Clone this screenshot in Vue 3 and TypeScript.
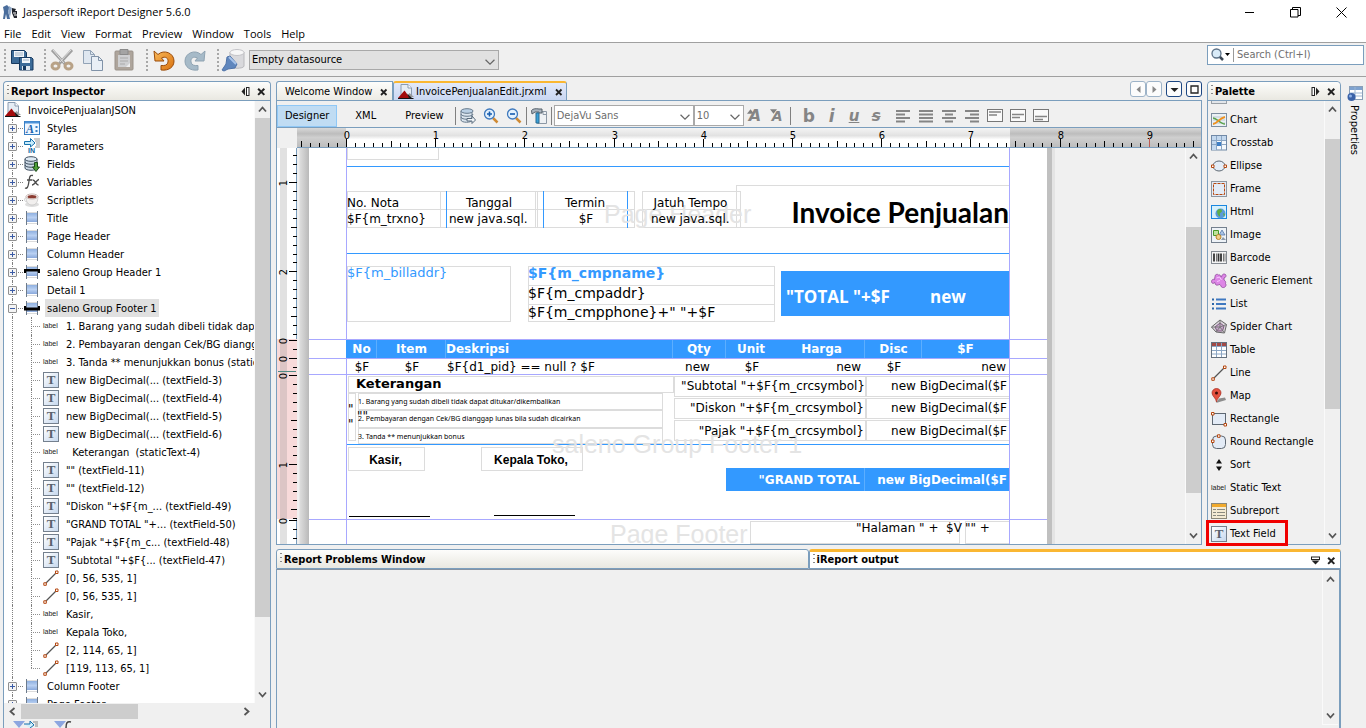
<script setup lang="ts">
interface TreeNode {
  label: string
  icon: string
  child?: boolean
  open?: boolean
  selected?: boolean
  last?: boolean
}
interface Shape {
  x: number
  y: number
  w: number
  h: number
  kind: string
}
interface CanvasText {
  t: string
  x: number
  y: number
  w?: number
  cls?: string
}

const menus = ['File', 'Edit', 'View', 'Format', 'Preview', 'Window', 'Tools', 'Help']

const tree: TreeNode[] = [
  { label: 'Styles', icon: 'styles' },
  { label: 'Parameters', icon: 'params' },
  { label: 'Fields', icon: 'fields' },
  { label: 'Variables', icon: 'fx' },
  { label: 'Scriptlets', icon: 'cup' },
  { label: 'Title', icon: 'band' },
  { label: 'Page Header', icon: 'band' },
  { label: 'Column Header', icon: 'band' },
  { label: 'saleno Group Header 1', icon: 'groupheader' },
  { label: 'Detail 1', icon: 'band' },
  { label: 'saleno Group Footer 1', icon: 'groupfooter', open: true, selected: true },
  { label: '1. Barang yang sudah dibeli tidak dapat ditukar', icon: 'label', child: true },
  { label: '2. Pembayaran dengan Cek/BG dianggap lunas', icon: 'label', child: true },
  { label: '3. Tanda ** menunjukkan bonus (staticText-3)', icon: 'label', child: true },
  { label: 'new BigDecimal(... (textField-3)', icon: 'text', child: true },
  { label: 'new BigDecimal(... (textField-4)', icon: 'text', child: true },
  { label: 'new BigDecimal(... (textField-5)', icon: 'text', child: true },
  { label: 'new BigDecimal(... (textField-6)', icon: 'text', child: true },
  { label: '  Keterangan  (staticText-4)', icon: 'label', child: true },
  { label: '"" (textField-11)', icon: 'text', child: true },
  { label: '"" (textField-12)', icon: 'text', child: true },
  { label: '"Diskon "+$F{m_... (textField-49)', icon: 'text', child: true },
  { label: '"GRAND TOTAL "+... (textField-50)', icon: 'text', child: true },
  { label: '"Pajak "+$F{m_c... (textField-48)', icon: 'text', child: true },
  { label: '"Subtotal "+$F{... (textField-47)', icon: 'text', child: true },
  { label: '[0, 56, 535, 1]', icon: 'line', child: true },
  { label: '[0, 56, 535, 1]', icon: 'line', child: true },
  { label: 'Kasir,', icon: 'label', child: true },
  { label: 'Kepala Toko,', icon: 'label', child: true },
  { label: '[2, 114, 65, 1]', icon: 'line', child: true },
  { label: '[119, 113, 65, 1]', icon: 'line', child: true, last: true },
  { label: 'Column Footer', icon: 'band' },
  { label: 'Page Footer', icon: 'band' },
]

const palette = [
  ['Chart', 'chart'], ['Crosstab', 'crosstab'], ['Ellipse', 'ellipse'], ['Frame', 'frame'],
  ['Html', 'html'], ['Image', 'image'], ['Barcode', 'barcode'], ['Generic Element', 'generic'],
  ['List', 'list'], ['Spider Chart', 'spider'], ['Table', 'table'], ['Line', 'line'],
  ['Map', 'map'], ['Rectangle', 'rect'], ['Round Rectangle', 'roundrect'], ['Sort', 'sort'],
  ['Static Text', 'label'], ['Subreport', 'subreport'], ['Text Field', 'text'],
]

const glyphs: Record<string, string> = { label: 'label', text: 'T', styles: 'A', params: 'IN' }

const letterFormats = [['b', 'Bold'], ['i', 'Italic'], ['u', 'Underline'], ['s', 'Strikethrough']]
const formats = [
  ['aleft', 'Align left'], ['ajust', 'Justify'], ['acenter', 'Align center'], ['aright', 'Align right'],
  ['vtop', 'Align top'], ['vmid', 'Align middle'], ['vbot', 'Align bottom'],
]

const INCH = 89.2
function ticks(start: number, from: number, to: number) {
  const out: { p: number; len: number; label: string }[] = []
  for (let n = -10; n < 110; n++) {
    const p = Math.round(start + (n * INCH) / 10)
    if (p < from || p > to) continue
    const major = n % 10 === 0
    out.push({ p, len: major ? 8 : n % 5 === 0 ? 6 : 4, label: major && n >= 0 ? String(n / 10) : '' })
  }
  return out
}
const hTicks = ticks(49, 2, 900)
const vTicks = [
  ...ticks(-55, 6, 188),
  ...ticks(192, 191, 206),
  ...ticks(210, 209, 222),
  ...ticks(227, 226, 370),
  ...ticks(372, 371, 395),
]

const shapes: Shape[] = [
  { x: 38, y: -10, w: 92, h: 22, kind: 'frame' },
  ...[[38, 100], [131, 98], [226, 100], [333, 99]].flatMap(([x, w]) => [
    { x, y: 43, w, h: 19, kind: 'frame' },
    { x, y: 61, w, h: 19, kind: 'frame' },
  ]),
  { x: 427, y: 37, w: 274, h: 43, kind: 'frame' },
  { x: 137, y: 43, w: 1, h: 37, kind: 'blue' },
  { x: 234, y: 43, w: 1, h: 37, kind: 'blue' },
  { x: 318, y: 43, w: 1, h: 37, kind: 'blue' },
  { x: 38, y: 118, w: 164, h: 56, kind: 'frame' },
  { x: 219, y: 118, w: 247, h: 20, kind: 'frame' },
  { x: 219, y: 137, w: 247, h: 20, kind: 'frame' },
  { x: 219, y: 156, w: 247, h: 18, kind: 'frame' },
  { x: 472, y: 123, w: 229, h: 45, kind: 'blue' },
  { x: 39, y: 228, w: 326, h: 17, kind: 'frame' },
  { x: 39, y: 245, w: 8, h: 48, kind: 'frame' },
  { x: 49, y: 245, w: 305, h: 17, kind: 'frame' },
  { x: 49, y: 262, w: 305, h: 18, kind: 'frame' },
  { x: 49, y: 280, w: 305, h: 16, kind: 'frame' },
  ...[228, 250, 272].flatMap((y) => [
    { x: 365, y, w: 192, h: 21, kind: 'frame' },
    { x: 557, y, w: 144, h: 21, kind: 'frame' },
  ]),
  { x: 39, y: 299, w: 77, h: 24, kind: 'frame' },
  { x: 172, y: 299, w: 102, h: 24, kind: 'frame' },
  { x: 441, y: 373, w: 210, h: 23, kind: 'frame' },
  { x: 656, y: 373, w: 45, h: 23, kind: 'frame' },
  { x: 417, y: 320, w: 284, h: 23, kind: 'blue' },
  { x: 555, y: 320, w: 1, h: 23, kind: 'split' },
  { x: 37, y: 18, w: 664, h: 1, kind: 'blue' },
  { x: 37, y: 105, w: 664, h: 1, kind: 'blue' },
  { x: 37, y: 296, w: 664, h: 1, kind: 'blue' },
  { x: 37, y: 0, w: 1, h: 396, kind: 'guide' },
  { x: 700, y: 0, w: 1, h: 396, kind: 'guide' },
  { x: 37, y: 192, w: 663, h: 18, kind: 'blue' },
  ...[67, 136, 363, 416, 555, 612].map((x) => ({ x, y: 192, w: 1, h: 18, kind: 'split' })),
  ...[191, 210, 226, 371].map((y) => ({ x: 0, y, w: 738, h: 1, kind: 'guide' })),
  { x: 40, y: 368, w: 81, h: 1, kind: 'ink' },
  { x: 185, y: 367, w: 81, h: 1, kind: 'ink' },
]

const texts: CanvasText[] = [
  { t: 'Page Header', x: 295, y: 66, cls: 'mark' },
  { t: 'saleno Group Footer 1', x: 243, y: 296, cls: 'mark' },
  { t: 'Page Footer', x: 301, y: 386, cls: 'mark' },
  { t: 'No. Nota', x: 38, y: 55 },
  { t: '$F{m_trxno}', x: 38, y: 71 },
  { t: 'Tanggal', x: 131, y: 55, w: 98, cls: 'middle' },
  { t: 'new java.sql.', x: 140, y: 71 },
  { t: 'Termin', x: 226, y: 55, w: 100, cls: 'middle' },
  { t: '$F', x: 226, y: 71, w: 102, cls: 'middle' },
  { t: 'Jatuh Tempo', x: 333, y: 55, w: 97, cls: 'middle' },
  { t: 'new java.sql.', x: 342, y: 71 },
  { t: 'Invoice Penjualan', x: 427, y: 64, w: 273, cls: 'headline right' },
  { t: '$F{m_billaddr}', x: 38, y: 125, cls: 'bill' },
  { t: '$F{m_cmpname}', x: 219, y: 125, cls: 'company strong tint' },
  { t: '$F{m_cmpaddr}', x: 219, y: 145, cls: 'company' },
  { t: '$F{m_cmpphone}+" "+$F', x: 219, y: 164, cls: 'company' },
  { t: '"TOTAL "+$F', x: 477, y: 149, cls: 'total' },
  { t: 'new', x: 621, y: 149, cls: 'total' },
  { t: 'No', x: 37, y: 201, w: 31, cls: 'strong white middle' },
  { t: 'Item', x: 68, y: 201, w: 69, cls: 'strong white middle' },
  { t: 'Deskripsi', x: 137, y: 201, cls: 'strong white' },
  { t: 'Qty', x: 363, y: 201, w: 54, cls: 'strong white middle' },
  { t: 'Unit', x: 416, y: 201, w: 52, cls: 'strong white middle' },
  { t: 'Harga', x: 468, y: 201, w: 89, cls: 'strong white middle' },
  { t: 'Disc', x: 555, y: 201, w: 59, cls: 'strong white middle' },
  { t: '$F', x: 612, y: 201, w: 89, cls: 'strong white middle' },
  { t: '$F', x: 37, y: 219, w: 32, cls: 'middle' },
  { t: '$F', x: 68, y: 219, w: 70, cls: 'middle' },
  { t: '$F{d1_pid} == null ? $F', x: 138, y: 219 },
  { t: 'new', x: 363, y: 219, w: 51, cls: 'middle' },
  { t: '$F', x: 416, y: 219, w: 54, cls: 'middle' },
  { t: 'new', x: 468, y: 219, w: 84, cls: 'right' },
  { t: '$F', x: 555, y: 219, w: 60, cls: 'middle' },
  { t: 'new', x: 612, y: 219, w: 85, cls: 'right' },
  { t: 'Keterangan', x: 47, y: 236, cls: 'strong note-title' },
  { t: '1. Barang yang sudah dibeli tidak dapat ditukar/dikembalikan', x: 49, y: 254, cls: 'tiny' },
  { t: '2. Pembayaran dengan Cek/BG dianggap lunas bila sudah dicairkan', x: 49, y: 271, cls: 'tiny' },
  { t: '3. Tanda ** menunjukkan bonus', x: 49, y: 289, cls: 'tiny' },
  { t: '"', x: 39, y: 261 },
  { t: '"', x: 39, y: 276 },
  { t: '""', x: 48, y: 268 },
  { t: '"Subtotal "+$F{m_crcsymbol}', x: 365, y: 238, w: 191, cls: 'right' },
  { t: '"Diskon "+$F{m_crcsymbol}', x: 365, y: 260, w: 190, cls: 'right' },
  { t: '"Pajak "+$F{m_crcsymbol}', x: 365, y: 283, w: 190, cls: 'right' },
  { t: 'new BigDecimal($F', x: 557, y: 238, w: 141, cls: 'right' },
  { t: 'new BigDecimal($F', x: 557, y: 260, w: 141, cls: 'right' },
  { t: 'new BigDecimal($F', x: 557, y: 283, w: 141, cls: 'right' },
  { t: 'Kasir,', x: 39, y: 312, w: 75, cls: 'sign middle' },
  { t: 'Kepala Toko,', x: 172, y: 312, w: 100, cls: 'sign middle' },
  { t: '"GRAND TOTAL', x: 417, y: 332, w: 134, cls: 'strong white right' },
  { t: 'new BigDecimal($F', x: 557, y: 332, w: 141, cls: 'strong white right' },
  { t: '"Halaman " +  $V', x: 547, y: 380 },
  { t: '"" +', x: 656, y: 380 },
]

function box(s: Shape) {
  return { left: s.x + 'px', top: s.y + 'px', width: s.w + 'px', height: s.h + 'px' }
}
function place(c: CanvasText) {
  return { left: c.x + 'px', top: c.y - 15 + 'px', width: c.w ? c.w + 'px' : 'auto' }
}
</script>

<template>
  <svg class="sheet-defs" aria-hidden="true">
    <defs>
      <linearGradient id="gBlue" x1="0" y1="0" x2="0" y2="1">
        <stop offset="0" stop-color="#8fb0e0" /><stop offset=".5" stop-color="#b9d0f2" /><stop offset="1" stop-color="#8aa9dc" />
      </linearGradient>
      <linearGradient id="gOrange" x1="0" y1="0" x2="1" y2="1">
        <stop offset="0" stop-color="#f9b95a" /><stop offset="1" stop-color="#d9720f" />
      </linearGradient>
    </defs>
    <symbol id="i-report" viewBox="0 0 16 16">
      <path d="M3 .5h7l3.500 3.500V12H3z" fill="#e6edf5" stroke="#8b9cb0" />
      <path d="M10 .5V4h3.500" fill="#fff" stroke="#8b9cb0" />
      <path d="M8 13l3.500-4L16 13z" fill="#9a9a9a" />
      <path d="M0 14l6.500-7.500L12 14z" fill="#a30b0b" /><path d="M9 9.500L14 14h-3z" fill="#1c1c1c" />
      <path d="M0 14.500h15.500" stroke="#111" />
    </symbol>
    <symbol id="i-styles" viewBox="0 0 16 16">
      <rect x=".5" y="1.500" width="15" height="13" fill="#eef6ff" stroke="#3a7fc4" />
      <path d="M1 2.500h14" stroke="#4d93d8" stroke-width="2" />
      <path d="M12.500 6v2M12.500 10v2" stroke="#3a7fc4" stroke-width="2" />
    </symbol>
    <symbol id="i-params" viewBox="0 0 16 16">
      <path d="M.5 3.500h6v-3L11 5 6.500 9V6.500h-6z" fill="#c9ecfb" stroke="#1771ad" />
      <path d="M10 1h6M11 3h5M12 5h4M12 7h4M11 9h5" stroke="#999" />
    </symbol>
    <symbol id="i-fields" viewBox="0 0 16 16">
      <path d="M1 3v9c0 3 12 3 12 0V3" fill="#cbd8e4" stroke="#3f4f60" />
      <ellipse cx="7" cy="3" rx="6" ry="2.300" fill="#dfeaf4" stroke="#3f4f60" />
      <path d="M1 6c0 3 12 3 12 0M1 9c0 3 12 3 12 0" fill="none" stroke="#3f4f60" />
      <path d="M10.500 6.500h3V11H15.500L12 15.500 8.500 11h2z" fill="#4fa03a" stroke="#1c4b1a" />
    </symbol>
    <symbol id="i-fx" viewBox="0 0 16 16">
      <path d="M1 14c2 1 3-1 3.500-4l1-6C6 1.500 7 1 9 1.500M3 6h5M8.500 6c3-.5 3 5 6 5M15 5.500c-2 0-4.500 5.500-7 5.500" fill="none" stroke="#4b4b4b" stroke-width="1.300" />
    </symbol>
    <symbol id="i-cup" viewBox="0 0 16 16">
      <ellipse cx="8" cy="12.500" rx="7" ry="2.500" fill="#dedede" />
      <path d="M2 4.500C2 10 4 13 8 13s6-3 6-8.500z" fill="#f1efee" stroke="#bbb" stroke-width=".6" />
      <ellipse cx="8" cy="4.500" rx="6" ry="2.500" fill="#fff" stroke="#c9b8b4" />
      <ellipse cx="8" cy="4.700" rx="4.500" ry="1.600" fill="#8b3b31" />
      <path d="M2 6c-2.500 0-1.500 4 1 4" fill="none" stroke="#ccc" />
    </symbol>
    <symbol id="i-band" viewBox="0 0 16 16">
      <rect x="3" y="3" width="10" height="9" fill="url(#gBlue)" />
      <path d="M2.500 1v14M13.500 1v14" stroke="#6d7b8c" />
      <path d="M3 2.500h10M3 13.500h10" stroke="#dcdcdc" />
    </symbol>
    <symbol id="i-groupheader" viewBox="0 0 16 16">
      <use href="#i-band" width="16" height="16" /><path d="M0 9V5h16v4h-2V7.500H2V9z" fill="#000" />
    </symbol>
    <symbol id="i-groupfooter" viewBox="0 0 16 16">
      <use href="#i-band" width="16" height="16" /><path d="M0 6v4.500h16V6h-2v1.500H2V6z" fill="#000" />
    </symbol>
    <symbol id="i-line" viewBox="0 0 16 16">
      <path d="M2.500 13.500l11-11" stroke="#555" stroke-width="1.300" />
      <path d="M.8 12.800h2.500v2.500H.8zM12.500 1H15v2.500h-2.500z" fill="#fff" stroke="#b5470f" />
    </symbol>
    <symbol id="i-chart" viewBox="0 0 16 16">
      <rect x=".5" y="1.500" width="15" height="13" fill="#eaf0f4" stroke="#7d8ea0" />
      <path d="M2 5h12M2 8h12M2 11h12" stroke="#b9c8d4" />
      <path d="M2 6c4 0 7 6 12 6" fill="none" stroke="#59a34a" stroke-width="1.500" /><path d="M2 12c4 0 6-6 12-7" fill="none" stroke="#f0911f" stroke-width="2" />
    </symbol>
    <symbol id="i-crosstab" viewBox="0 0 16 16">
      <rect x=".5" y=".5" width="15" height="14.500" fill="#f5f9fd" stroke="#7189a6" />
      <path d="M1 1h14v4H1zM1 1h4v14H1z" fill="#c3d8ee" />
      <path d="M5.500 1v14M10.500 1v14M1 5.500h14M1 9.500h14" stroke="#8ba6c4" /><path d="M6 7h4v4H6z" fill="#3f7fc5" />
    </symbol>
    <symbol id="i-ellipse" viewBox="0 0 16 16">
      <ellipse cx="8" cy="8" rx="6" ry="5" fill="#e4edf7" stroke="#5e6873" />
      <path d="M.5 7h2.500v2.500H.5zM13 7h2.500v2.500H13z" fill="#fff" stroke="#b5470f" />
    </symbol>
    <symbol id="i-frame" viewBox="0 0 16 16">
      <rect x=".5" y=".5" width="15" height="15" fill="#e3ebf6" stroke="#8c95a0" />
      <rect x="2.500" y="2.500" width="11" height="11" fill="none" stroke="#b5470f" stroke-dasharray="3 1" />
    </symbol>
    <symbol id="i-break" viewBox="0 0 16 16">
      <rect x=".5" y=".5" width="15" height="15" fill="#e3e6ea" stroke="#9aa0a6" />
    </symbol>
    <symbol id="i-html" viewBox="0 0 16 16">
      <rect x=".5" y="1.500" width="15" height="13" fill="#d6f0fb" stroke="#1a87e0" />
      <circle cx="9.500" cy="9.500" r="5" fill="#5b9ad8" /><path d="M6 7c2-3 5-2 5 0s-3 1-2 4-3 1-3-4zM12 9l2 1-1 3z" fill="#5fae45" />
    </symbol>
    <symbol id="i-image" viewBox="0 0 16 16">
      <rect x=".5" y=".5" width="15" height="15" fill="#eef3f8" stroke="#74808e" />
      <path d="M2.500 3.500h5v5h-5z" fill="#bfe39c" stroke="#4a9a2a" /><path d="M11 3l3 5H8z" fill="#a9c4e6" stroke="#4a6f9f" stroke-width=".7" />
      <circle cx="7.500" cy="10" r="2.500" fill="#f1cf8c" stroke="#b98526" /><path d="M10 13l2-3 3 3z" fill="#8d9aa8" />
    </symbol>
    <symbol id="i-barcode" viewBox="0 0 16 16">
      <rect x=".5" y="1.500" width="15" height="12" fill="#f4f4f4" stroke="#858b92" />
      <path d="M3 3.500v8M7.500 3.500v8M10 3.500v8" stroke="#333" stroke-width="1.800" /><path d="M5.500 3.500v8M12.500 3.500v8M14 3.500v8" stroke="#555" stroke-width=".8" />
    </symbol>
    <symbol id="i-generic" viewBox="0 0 16 16">
      <path d="M4 3.500a2 2 0 013.500-1.500c1-.5 2 0 2 1.500l1 .5c.5-3 2.500-3.500 4-2.500 1 1 .5 3-1.500 3.500v2c1.500 1 2 2 1.500 3.500 1.500 2-.5 4.500-3 4-2-.5-1.500-2.500-2.500-3-1.500 0-2 1-4 .5-1-.5-.5-2-1-2.500C2.500 11 .500 10.500.5 8.500s2-2.500 3-2z" fill="#dd86e6" stroke="#8e4a9b" stroke-width=".8" />
      <path d="M5.500 5l3-1 2 3M6 8.500l3-1" stroke="#f7c9ff" fill="none" />
    </symbol>
    <symbol id="i-list" viewBox="0 0 16 16">
      <path d="M1 3.500h3M1 8h3M1 12.500h3" stroke="#2c66a8" stroke-width="2" stroke-dasharray="2 1" /><path d="M5 3.500h10M5 8h10M5 12.500h10" stroke="#3f78c0" stroke-width="2" />
    </symbol>
    <symbol id="i-spider" viewBox="0 0 16 16">
      <path d="M9 1l6.500 4.500-2 8.500L5 13 .5 8z" fill="#dcd6dd" stroke="#666" /><path d="M9 4l4 3-1.500 5H6L4 8z" fill="#c9a9cc" stroke="#7a5a7d" /><path d="M9 1v7l6.500-2.500M9 8l4.500 6M9 8l-4 5M9 8H.5" stroke="#777" fill="none" />
    </symbol>
    <symbol id="i-table" viewBox="0 0 16 16">
      <rect x=".5" y=".5" width="15" height="15" fill="#fff" stroke="#65717e" /><path d="M1 1h14v3H1z" fill="#a34a45" />
      <path d="M1 4.500h14M5.500 1v14M10.500 1v14M1 8.500h14M1 12h14" stroke="#8ba6c4" />
    </symbol>
    <symbol id="i-map" viewBox="0 0 16 16">
      <path d="M5 15l3-4.500 6-1 1 2.500z" fill="#8d8d8d" /><path d="M5.500 14C5 10 1 8 1 5a4.500 4.500 0 019 0c0 3-4 5-4.500 9z" fill="#e4503f" stroke="#a52a1c" stroke-width=".7" /><circle cx="5.500" cy="5" r="1.500" fill="#3d0c07" />
    </symbol>
    <symbol id="i-rect" viewBox="0 0 16 16">
      <rect x="1.500" y="2.500" width="13" height="11" fill="#e3ebf6" stroke="#5e6873" /><path d="M.5 1.500H3V4H.5zM13 12.500h2.500V15H13z" fill="#fff" stroke="#b5470f" />
    </symbol>
    <symbol id="i-roundrect" viewBox="0 0 16 16">
      <rect x="1.500" y="2" width="13" height="12.500" rx="4" fill="#e3ebf6" stroke="#5e6873" /><path d="M.5 6H3v2.500H.5zM6.500 .8H9v2.500H6.500z" fill="#fff" stroke="#b5470f" />
    </symbol>
    <symbol id="i-sort" viewBox="0 0 16 16">
      <path d="M8 2l3 4.500H5zM8 14l3-4.500H5z" fill="#111" />
    </symbol>
    <symbol id="i-subreport" viewBox="0 0 16 16">
      <rect x=".5" y=".5" width="15" height="15" fill="#f4ead2" stroke="#8b8777" /><path d="M1 1h14v3H1z" fill="#f0a92c" />
      <path d="M2 6.500h3M2 9.500h3M2 12.500h3M6 6.500h8M6 9.500h8M6 12.500h8" stroke="#8a8a80" />
    </symbol>
    <symbol id="i-saveall" viewBox="0 0 24 24">
      <path d="M1.500 2.500h13l2 2v11h-15z" fill="#3c6b98" stroke="#16395f" /><path d="M4 3h10v6H4z" fill="#f2f6fa" /><path d="M5 5h8M5 7h8" stroke="#9eb2c6" />
      <path d="M9.500 9.500h12l1.500 1.500v11h-13.500z" fill="#3c6b98" stroke="#16395f" /><path d="M12 10h8v5h-8z" fill="#f2f6fa" /><path d="M13 12h6" stroke="#9eb2c6" /><path d="M12 18h8v4h-8z" fill="#dfe7ef" /><path d="M13 18h3v4h-3z" fill="#16395f" />
    </symbol>
    <symbol id="i-cut" viewBox="0 0 24 24">
      <path d="M2 2l14 15M22 2L8 17" stroke="#a0a0a0" stroke-width="3" /><path d="M3 2l11 13M21 2L10 14" stroke="#dedede" />
      <ellipse cx="5.500" cy="18" rx="3.500" ry="3" fill="none" stroke="#b8a287" stroke-width="3" /><ellipse cx="18.500" cy="18" rx="3.500" ry="3" fill="none" stroke="#b8a287" stroke-width="3" />
    </symbol>
    <symbol id="i-copy" viewBox="0 0 24 24">
      <path d="M2.500 2.500h7l4 4v9h-11z" fill="#dfe7f0" stroke="#92a3b6" /><path d="M9.500 2.500v4h4" fill="none" stroke="#92a3b6" />
      <path d="M10.500 8.500h7l4 4v10h-11z" fill="#e9eff6" stroke="#8193a8" /><path d="M17.500 8.500v4h4" fill="none" stroke="#8193a8" />
    </symbol>
    <symbol id="i-paste" viewBox="0 0 24 24">
      <rect x="3" y="3" width="18" height="19" rx="1" fill="#aea59c" stroke="#9a928a" /><path d="M6 7h12v12H6z" fill="#cfd0d2" /><path d="M8 1.500h8v5H8z" fill="#a4a4a4" stroke="#8b8b8b" /><path d="M8 10h8M8 13h8M8 16h5" stroke="#aaa" /><path d="M14 19l4-4v4z" fill="#eee" />
    </symbol>
    <symbol id="i-undo" viewBox="0 0 24 24">
      <path d="M2 3l1 10 9 0-2.500-3c4-2 7 0 6.500 4-.5 3-3 4-7 3.500v4.500c8 1 13-3 13-9C22 5 12 1 6 6.500z" fill="url(#gOrange)" stroke="#9b4d0b" />
    </symbol>
    <symbol id="i-redo" viewBox="0 0 24 24">
      <path d="M22 3l-1 10-9 0 2.500-3c-4-2-7 0-6.500 4 .5 3 3 4 7 3.500v4.500c-8 1-13-3-13-9C2 5 12 1 18 6.500z" fill="#a6bac8" stroke="#8fa3b2" />
    </symbol>
    <symbol id="i-plug" viewBox="0 0 24 24">
      <path d="M9 4v14c0 3 14 3 14 0V4" fill="#d9d9dc" stroke="#b8b8bc" /><ellipse cx="16" cy="4.500" rx="7" ry="3" fill="#f7f7f7" stroke="#c4c4c8" />
      <path d="M1 22l4-6 1-7 3-1 7 8-2 4-7 1-4 2z" fill="#5f86bd" stroke="#4f73a8" /><path d="M8 9l7 7" stroke="#a7c3ea" stroke-width="2" />
    </symbol>
    <symbol id="i-dbgo" viewBox="0 0 16 16">
      <path d="M1 3v9c0 3 11 3 11 0V3" fill="#dbe5ee" stroke="#66798c" /><ellipse cx="7" cy="3" rx="6" ry="2.300" fill="#b9cfe4" stroke="#66798c" /><path d="M1 6c0 3 12 3 12 0M1 9c0 3 12 3 12 0" fill="none" stroke="#66798c" /><path d="M7 10.500h5V8l3.500 4L12 15.500V13H7z" fill="#eef3f7" stroke="#596b7d" />
    </symbol>
    <symbol id="i-zoomin" viewBox="0 0 16 16">
      <path d="M10 10l4.500 4.500" stroke="#cf8a34" stroke-width="2.500" /><circle cx="6.500" cy="6" r="5" fill="#e4f1fd" stroke="#3f79bd" stroke-width="1.300" /><path d="M4 6h5M6.500 3.500v5" stroke="#155cb0" stroke-width="1.600" />
    </symbol>
    <symbol id="i-zoomout" viewBox="0 0 16 16">
      <path d="M10 10l4.500 4.500" stroke="#cf8a34" stroke-width="2.500" /><circle cx="6.500" cy="6" r="5" fill="#e4f1fd" stroke="#3f79bd" stroke-width="1.300" /><path d="M4 6h5" stroke="#155cb0" stroke-width="1.600" />
    </symbol>
    <symbol id="i-build" viewBox="0 0 16 16">
      <path d="M6.500 3.500h9v12h-9z" fill="#eef1f4" stroke="#8c98a5" /><path d="M12 3.500v3h3" stroke="#8c98a5" fill="none" /><path d="M.5 2.500C2 .5 5 .5 8 1h3v4H8V4H4L1 6z" fill="#aab4be" stroke="#55606b" /><path d="M5 5h3v10H5z" fill="#3ba0d8" stroke="#2b6c92" />
    </symbol>
    <symbol id="i-aleft" viewBox="0 0 16 16"><path d="M1 3h14M1 6.500h9M1 10h14M1 13.500h9" stroke="#858585" stroke-width="2" /></symbol>
    <symbol id="i-ajust" viewBox="0 0 16 16"><path d="M1 3h14M1 6.500h14M1 10h14M1 13.500h14" stroke="#858585" stroke-width="2" /></symbol>
    <symbol id="i-acenter" viewBox="0 0 16 16"><path d="M1 3h14M4 6.500h8M1 10h14M4 13.500h8" stroke="#858585" stroke-width="2" /></symbol>
    <symbol id="i-aright" viewBox="0 0 16 16"><path d="M1 3h14M6 6.500h9M1 10h14M6 13.500h9" stroke="#858585" stroke-width="2" /></symbol>
    <symbol id="i-vtop" viewBox="0 0 16 16"><rect x=".5" y="1.500" width="15" height="12" fill="#fafafa" stroke="#777" /><path d="M2 4h12M2 7h8" stroke="#858585" stroke-width="1.700" /></symbol>
    <symbol id="i-vmid" viewBox="0 0 16 16"><rect x=".5" y="1.500" width="15" height="12" fill="#fafafa" stroke="#777" /><path d="M2 6.500h12M2 9.500h8" stroke="#858585" stroke-width="1.700" /></symbol>
    <symbol id="i-vbot" viewBox="0 0 16 16"><rect x=".5" y="1.500" width="15" height="12" fill="#fafafa" stroke="#777" /><path d="M2 8.500h12M2 11.500h8" stroke="#858585" stroke-width="1.700" /></symbol>
    <symbol id="i-x" viewBox="0 0 8 8"><path d="M1 1.500l5.500 5.500M6.500 1.500L1 7" stroke="#222" stroke-width="1.800" /></symbol>
    <symbol id="i-up" viewBox="0 0 9 9"><path d="M1 6.500l3.500-4 3.500 4" fill="none" stroke="#555" stroke-width="1.800" /></symbol>
    <symbol id="i-down" viewBox="0 0 9 9"><path d="M1 2.500l3.500 4 3.500-4" fill="none" stroke="#555" stroke-width="1.800" /></symbol>
    <symbol id="i-left" viewBox="0 0 9 9"><path d="M6.500 1l-4 3.500 4 3.500" fill="none" stroke="#555" stroke-width="1.800" /></symbol>
    <symbol id="i-right" viewBox="0 0 9 9"><path d="M2.500 1l4 3.500-4 3.500" fill="none" stroke="#555" stroke-width="1.800" /></symbol>
    <symbol id="i-chev" viewBox="0 0 9 9"><path d="M.5 2.500l4 4 4-4" fill="none" stroke="#666" stroke-width="1.100" /></symbol>
    <symbol id="i-slideleft" viewBox="0 0 9 9"><path d="M4 .5v8L.5 4.500z" fill="#222" /><rect x="5.500" y=".5" width="2.500" height="8" fill="#fff" stroke="#222" /></symbol>
    <symbol id="i-slideright" viewBox="0 0 9 9"><path d="M5 .5v8l3.500-4z" fill="#222" /><rect x="1" y=".5" width="2.500" height="8" fill="#fff" stroke="#222" /></symbol>
    <symbol id="i-slidedown" viewBox="0 0 9 9"><path d="M.5 4.500h8L4.500 8.500z" fill="#222" /><rect x=".5" y="1" width="8" height="2.500" fill="#fff" stroke="#222" /></symbol>
  </svg>

  <div class="app">
    <header class="titlebar">
      <svg class="logo" viewBox="0 0 16 16">
        <path d="M1 3l4-2 3 3-2 3 2 8H5L4 10l-1 5H1l1-7z" fill="#4a6d9c" /><path d="M7 2l3 2-2 9-2-5z" fill="#8fa7c6" />
        <path d="M10 4l4 1-1 2h2v7h-3l-2-5z" fill="#20242c" /><path d="M11 9h3M12 11h3" stroke="#fff" />
      </svg>
      <h1>Jaspersoft iReport Designer 5.6.0</h1>
      <div class="window-buttons">
        <button aria-label="Minimize"><svg viewBox="0 0 11 11"><path d="M1 5.500h9" stroke="#000" /></svg></button>
        <button aria-label="Restore"><svg viewBox="0 0 11 11"><path d="M.5 2.500h7.500v7.500H.5zM2.500 2.500v-2h8v8H8" fill="none" stroke="#000" /></svg></button>
        <button aria-label="Close"><svg viewBox="0 0 11 11"><path d="M.5 .5l10 10M10.500 .5l-10 10" stroke="#000" /></svg></button>
      </div>
    </header>

    <nav class="menubar">
      <button v-for="m in menus" :key="m">{{ m }}</button>
    </nav>

    <div class="main-toolbar">
      <i class="grip"></i>
      <button aria-label="Save all"><svg><use href="#i-saveall" /></svg></button>
      <i class="grip"></i>
      <button aria-label="Cut"><svg><use href="#i-cut" /></svg></button>
      <button aria-label="Copy"><svg><use href="#i-copy" /></svg></button>
      <button aria-label="Paste"><svg><use href="#i-paste" /></svg></button>
      <i class="grip"></i>
      <button aria-label="Undo"><svg><use href="#i-undo" /></svg></button>
      <button aria-label="Redo"><svg><use href="#i-redo" /></svg></button>
      <i class="grip"></i>
      <button class="tight" aria-label="Datasources"><svg><use href="#i-plug" /></svg></button>
      <span class="combo datasource">
        <select aria-label="Datasource"><option>Empty datasource</option></select>
        <svg class="chev"><use href="#i-chev" /></svg>
      </span>
      <div class="search">
        <svg viewBox="0 0 20 14">
          <path d="M8 8l4 4" stroke="#3a4654" stroke-width="2.500" /><circle cx="5.500" cy="5.500" r="4.500" fill="#d9ebf8" stroke="#5c7187" stroke-width="1.300" /><path d="M14 5h5l-2.500 3z" fill="#000" />
        </svg>
        <input type="text" aria-label="Search" placeholder="Search (Ctrl+I)" />
      </div>
    </div>

    <main class="workspace">
      <aside class="panel inspector">
        <div class="panel-head">
          <i class="dots"></i><h2>Report Inspector</h2>
          <button aria-label="Slide out"><svg><use href="#i-slideleft" /></svg></button>
          <button aria-label="Close inspector"><svg><use href="#i-x" /></svg></button>
        </div>
        <div class="tree-area">
          <ul class="tree">
            <li class="root"><svg class="ico"><use href="#i-report" /></svg><span>InvoicePenjualanJSON</span></li>
            <li v-for="(n, i) in tree" :key="i" :class="{ child: n.child, last: n.last }">
              <i v-if="!n.child" class="twig" :class="{ open: n.open }"></i>
              <i v-else class="stem"></i>
              <b class="ico" :class="'k-' + n.icon">
                <svg class="ico"><use :href="'#i-' + n.icon" /></svg>
                <em v-if="glyphs[n.icon]">{{ glyphs[n.icon] }}</em>
              </b>
              <span :class="{ selected: n.selected }">{{ n.label }}</span>
            </li>
          </ul>
          <div class="vbar">
            <svg><use href="#i-up" /></svg><i class="thumb tree-thumb"></i><svg class="end"><use href="#i-down" /></svg>
          </div>
        </div>
        <div class="hbar">
          <svg><use href="#i-left" /></svg><i class="thumb"></i><svg class="end"><use href="#i-right" /></svg>
        </div>
        <div class="filters">
          <svg viewBox="0 0 60 8">
            <path d="M0 1h12L6 8z" fill="#8ca6e0" /><path d="M11 4h6V1l4 4-4 3" fill="#d2effb" stroke="#1771ad" /><path d="M20 2h5M22 4h3M22 6h3" stroke="#888" />
            <path d="M41 1h12l-6 7z" fill="#8ca6e0" /><path d="M53 8c0-5 1-7 5-6" fill="none" stroke="#444" stroke-width="1.500" />
          </svg>
        </div>
      </aside>

      <div class="center">
        <div class="upper">
          <section class="editor">
            <div class="tabs">
              <div class="tab"><span>Welcome Window</span><button aria-label="Close Welcome Window"><svg><use href="#i-x" /></svg></button></div>
              <div class="tab active">
                <svg class="ico"><use href="#i-report" /></svg><span>InvoicePenjualanEdit.jrxml</span>
                <button aria-label="Close InvoicePenjualanEdit.jrxml"><svg><use href="#i-x" /></svg></button>
              </div>
              <div class="tab-tools">
                <button class="pale" aria-label="Previous tab"><svg viewBox="0 0 9 9"><path d="M6.500 1v7l-4-3.500z" fill="#888" /></svg></button>
                <button class="pale next" aria-label="Next tab"><svg viewBox="0 0 9 9"><path d="M2.500 1v7l4-3.500z" fill="#888" /></svg></button>
                <button aria-label="Tab list"><svg viewBox="0 0 9 9"><path d="M.5 3h8l-4 4z" fill="#222" /></svg></button>
                <button aria-label="Maximize"><svg viewBox="0 0 9 9"><path d="M1 1h7v7H1z" fill="none" stroke="#222" stroke-width="1.300" /></svg></button>
              </div>
            </div>

            <div class="editor-body">
              <div class="edit-bar">
                <div class="modes">
                  <button class="mode on">Designer</button>
                  <button class="mode">XML</button>
                  <button class="mode">Preview</button>
                </div>
                <i class="sep"></i>
                <button class="tool" aria-label="Query"><svg><use href="#i-dbgo" /></svg></button>
                <button class="tool" aria-label="Zoom in"><svg><use href="#i-zoomin" /></svg></button>
                <button class="tool" aria-label="Zoom out"><svg><use href="#i-zoomout" /></svg></button>
                <i class="sep"></i>
                <button class="tool" aria-label="Build"><svg><use href="#i-build" /></svg></button>
                <i class="sep"></i>
                <span class="combo family">
                  <select aria-label="Font"><option>DejaVu Sans</option></select><svg class="chev"><use href="#i-chev" /></svg>
                </span>
                <span class="combo size">
                  <select aria-label="Font size"><option>10</option></select><svg class="chev"><use href="#i-chev" /></svg>
                </span>
                <button class="tool letter grow" aria-label="Increase font"><svg viewBox="0 0 8 5"><path d="M4 0l4 5H0z" fill="#808080" /></svg>A</button>
                <button class="tool letter shrink" aria-label="Decrease font"><svg viewBox="0 0 8 5"><path d="M4 5l4-5H0z" fill="#808080" /></svg>A</button>
                <i class="sep"></i>
                <span class="formats">
                  <button v-for="f in letterFormats" :key="f[0]" class="tool letter" :class="'f-' + f[0]" :aria-label="f[1]">{{ f[0] }}</button>
                  <button v-for="f in formats" :key="f[0]" class="tool" :aria-label="f[1]"><svg><use :href="'#i-' + f[0]" /></svg></button>
                </span>
              </div>

              <div class="h-ruler">
                <div class="h-scale">
                  <i class="outside before"></i><i class="inside"></i><i class="outside after"></i>
                  <svg>
                    <g v-for="t in hTicks" :key="t.p">
                      <path :d="`M${t.p + 0.5} 19v-${t.len}`" stroke="#000" />
                      <text v-if="t.label" :x="t.p + 1" y="11" text-anchor="middle">{{ t.label }}</text>
                    </g>
                    <path d="M852.500 10v9" stroke="#c05a50" />
                  </svg>
                </div>
              </div>

              <div class="stage">
                <div class="v-ruler">
                  <svg>
                    <rect x="0" y="191" width="20" height="180" fill="#f8dada" />
                    <rect x="3" y="0" width="7" height="400" fill="#888" fill-opacity=".25" />
                    <g v-for="(t, i) in vTicks" :key="i">
                      <path :d="`M20 ${t.p + 0.5}h-${t.len}`" stroke="#000" />
                      <text v-if="t.label" :transform="`translate(10 ${t.p + 1}) rotate(-90)`" text-anchor="middle">{{ t.label }}</text>
                    </g>
                    <path d="M1 223.500h18" stroke="#4d8a84" />
                  </svg>
                </div>
                <div class="canvas">
                  <div class="page">
                    <div class="clip">
                      <i v-for="(s, i) in shapes" :key="i" class="shape" :class="s.kind" :style="box(s)"></i>
                      <span v-for="(c, i) in texts" :key="'t' + i" class="ctext" :class="c.cls" :style="place(c)">{{ c.t }}</span>
                    </div>
                  </div>
                </div>
                <div class="vbar">
                  <svg><use href="#i-up" /></svg><i class="thumb stage-thumb"></i><svg class="end"><use href="#i-down" /></svg>
                </div>
              </div>
            </div>
          </section>

          <section class="panel palette">
            <div class="panel-head">
              <i class="dots"></i><h2>Palette</h2>
              <button aria-label="Slide palette out"><svg><use href="#i-slideright" /></svg></button>
              <button aria-label="Close palette"><svg><use href="#i-x" /></svg></button>
            </div>
            <div class="palette-area">
              <ul>
                <li class="cut"><svg class="ico"><use href="#i-break" /></svg></li>
                <li v-for="p in palette" :key="p[0]">
                  <b class="ico" :class="'k-' + p[1]">
                    <svg class="ico"><use :href="'#i-' + p[1]" /></svg>
                    <em v-if="glyphs[p[1]]">{{ glyphs[p[1]] }}</em>
                  </b>
                  <span>{{ p[0] }}</span>
                </li>
              </ul>
              <div class="vbar">
                <svg><use href="#i-up" /></svg><i class="thumb palette-thumb"></i><svg class="end"><use href="#i-down" /></svg>
              </div>
            </div>
            <i class="highlight"></i>
          </section>
        </div>

        <section class="output">
          <div class="output-heads">
            <div class="output-head"><i class="dots"></i><h2>Report Problems Window</h2></div>
            <div class="output-head active">
              <i class="dots"></i><h2>iReport output</h2>
              <button aria-label="Slide output down"><svg><use href="#i-slidedown" /></svg></button>
              <button aria-label="Close output"><svg><use href="#i-x" /></svg></button>
            </div>
          </div>
          <div class="output-body">
            <div class="vbar"><svg><use href="#i-up" /></svg><svg class="end"><use href="#i-down" /></svg></div>
          </div>
        </section>
      </div>

      <aside class="dock">
        <button>
          <svg viewBox="0 0 16 16">
            <rect x="2.500" y=".5" width="13" height="13" fill="#fff" stroke="#8a9fb8" /><path d="M3 1h12v3H3z" fill="#7fa3d0" /><path d="M3 7h12M3 10h12M8 1v12" stroke="#9db6d3" />
            <circle cx="4.500" cy="11" r="4" fill="#3a62a8" /><circle cx="3.500" cy="10" r="1.500" fill="#8fb2e8" />
          </svg>
          <span>Properties</span>
        </button>
      </aside>
    </main>
  </div>
</template>

<style>
html,
body {
  margin: 0;
  overflow: hidden;
}
</style>

<style scoped>
* {
  box-sizing: border-box;
}
.sheet-defs {
  position: absolute;
  width: 0;
  height: 0;
}
.app {
  --edge: #7b9ebd;
  --face: #f0f0f0;
  height: 100vh;
  display: flex;
  flex-direction: column;
  overflow: hidden;
  background: var(--face);
  color: #000;
  font: 11px/18px "DejaVu Sans Condensed", "Noto Sans", sans-serif;
}
button {
  border: 0;
  padding: 0;
  background: none;
  font: inherit;
  color: inherit;
  display: flex;
  align-items: center;
}
select,
input {
  font: inherit;
  margin: 0;
}
ul {
  list-style: none;
  margin: 0;
  padding: 0;
}
svg {
  display: block;
  flex: none;
}
i {
  display: block;
  flex: none;
}
h1,
h2 {
  margin: 0;
  font-size: inherit;
}
.ico {
  width: 16px;
  height: 16px;
}
b.ico {
  position: relative;
  flex: none;
}
.ico em {
  position: absolute;
  left: 0;
  top: 0;
  line-height: 16px;
}
.k-label em {
  font: 7px/16px "Liberation Sans", sans-serif;
  color: #222;
}
.k-text {
  background: linear-gradient(135deg, #fff, #c6d8ee);
  border: 1px solid #74808e;
}
.k-text em {
  width: 14px;
  text-align: center;
  font: 700 13px/14px "Liberation Serif", serif;
  color: #59616c;
}
.k-styles em {
  left: 2px;
  top: 1px;
  font: italic 700 12px/16px "Liberation Serif", serif;
  color: #1b62ab;
}
.k-params em {
  left: 4px;
  top: 8px;
  font: 700 7px/9px "Liberation Sans", sans-serif;
  color: #0d5f9c;
}

.titlebar {
  height: 24px;
  flex: none;
  display: flex;
  align-items: center;
  background: #fff;
  padding-left: 2px;
}
.titlebar h1 {
  font: 11px/24px "Open Sans", "Noto Sans", sans-serif;
  margin-left: 5px;
}
.logo {
  width: 16px;
  height: 16px;
}
.window-buttons {
  margin-left: auto;
  padding-right: 2px;
  display: flex;
}
.window-buttons button {
  width: 46px;
  height: 20px;
  justify-content: center;
}
.window-buttons svg {
  width: 11px;
  height: 11px;
}
.menubar {
  height: 19px;
  flex: none;
  display: flex;
  gap: 10px;
  padding-left: 4px;
  background: #fff;
  border-bottom: 1px solid #a0a0a0;
  font: 11px/17px "Open Sans", "Noto Sans", sans-serif;
}
.main-toolbar {
  height: 34px;
  flex: none;
  display: flex;
  align-items: center;
  gap: 7px;
  padding: 0 2px 0 1px;
  border-bottom: 1px solid #a0a0a0;
}
.main-toolbar button svg {
  width: 24px;
  height: 24px;
}
.grip {
  width: 2px;
  height: 22px;
  margin: 0 -3px 0 3px;
  background: repeating-linear-gradient(#a8a8a8 0 2px, transparent 2px 4px);
}
.tight {
  margin: 0 -3px 0 -2px;
}
.combo {
  position: relative;
  display: flex;
}
.combo select {
  appearance: none;
  width: 100%;
  border: 1px solid #a9a9a9;
  border-radius: 0;
  padding: 0 2px;
  color: #000;
}
.chev {
  position: absolute;
  right: 4px;
  top: 7px;
  width: 10px;
  height: 10px;
}
.datasource {
  width: 250px;
}
.datasource select {
  height: 20px;
  background: #e1e1e1;
}
.search {
  margin-left: auto;
  margin-bottom: 9px;
  width: 157px;
  height: 20px;
  display: flex;
  align-items: center;
  background: #fff;
  border: 1px solid var(--edge);
  padding-left: 3px;
}
.search svg {
  width: 20px;
  height: 14px;
}
.search input {
  flex: 1;
  min-width: 0;
  height: 14px;
  border: 0;
  border-left: 1px solid #999;
  margin-left: 2px;
  padding: 0 0 0 3px;
  background: none;
}
.search input::placeholder {
  color: #707070;
  opacity: 1;
}

.workspace {
  flex: 1;
  min-height: 0;
  display: flex;
  padding: 4px 0 0 3px;
}
.panel {
  display: flex;
  flex-direction: column;
  border: 1px solid var(--edge);
  border-radius: 4px 4px 0 0;
}
.panel-head {
  height: 19px;
  flex: none;
  display: flex;
  align-items: center;
  gap: 4px;
  padding: 0 4px 0 3px;
  background: linear-gradient(#fdfdfb, #e9e8e1);
  border-bottom: 1px solid var(--edge);
  border-radius: 4px 4px 0 0;
}
.panel-head h2,
.output-head h2 {
  flex: 1;
  padding-top: 1px;
  font-weight: 700;
  white-space: nowrap;
}
.panel-head button svg,
.output-head button svg {
  width: 9px;
  height: 9px;
}
.panel-head button + button,
.output-head button + button {
  margin-left: 3px;
}
.dots {
  width: 2px;
  height: 12px;
  background: repeating-linear-gradient(#888 0 1px, transparent 1px 4px);
}
.panel-head .dots,
.output-head .dots {
  margin-right: -2px;
}
.vbar {
  width: 16px;
  flex: none;
  display: flex;
  flex-direction: column;
  align-items: center;
  background: var(--face);
  border-left: 1px solid #fafafa;
  padding: 4px 0;
}
.vbar svg,
.hbar svg {
  width: 9px;
  height: 9px;
}
.thumb {
  background: #cdcdcd;
}
.vbar .thumb {
  align-self: stretch;
}
.vbar .end {
  margin-top: auto;
}

.inspector {
  width: 268px;
  flex: none;
  border-bottom: 0;
}
.tree-area {
  flex: 1;
  min-height: 0;
  display: flex;
  background: #fff;
}
.tree {
  flex: 1;
  min-width: 0;
  overflow: hidden;
}
.tree li {
  position: relative;
  height: 18px;
  display: flex;
  align-items: center;
  padding-left: 4px;
  white-space: pre;
}
.tree li.root {
  padding-left: 1px;
}
.tree li.root span {
  margin-left: 7px;
  padding-top: 2px;
}
.tree li:not(.root)::before {
  content: "";
  position: absolute;
  left: 8px;
  top: 0;
  bottom: 0;
  border-left: 1px dotted #808080;
}
.tree .twig {
  position: relative;
  width: 9px;
  height: 9px;
  margin-right: 7px;
  border: 1px solid #919191;
  border-radius: 1px;
  background:
    linear-gradient(#3b5ba5, #3b5ba5) center / 5px 1px no-repeat,
    linear-gradient(#3b5ba5, #3b5ba5) center / 1px 5px no-repeat,
    #f4f4f4;
}
.tree .twig.open {
  background: linear-gradient(#3b5ba5, #3b5ba5) center / 5px 1px no-repeat, #f4f4f4;
}
.tree .twig::after {
  content: "";
  position: absolute;
  left: 9px;
  top: 3px;
  width: 5px;
  border-top: 1px dotted #808080;
}
.tree .stem {
  position: relative;
  align-self: stretch;
  width: 10px;
  margin-left: 23px;
  margin-right: 2px;
  background: linear-gradient(90deg, #909090 50%, transparent 50%) left center / 2px 1px repeat-x;
}
.tree .stem::before {
  content: "";
  position: absolute;
  left: 0;
  top: 0;
  bottom: 0;
  border-left: 1px dotted #808080;
}
.tree .last .stem::before {
  bottom: 9px;
}
.tree li:not(.root) > span {
  margin-left: 5px;
  padding: 1px 2px 0;
  line-height: 17px;
}
.tree .selected {
  background: #e0e0e0;
}
.tree-thumb {
  margin-top: 4px;
  height: 499px;
}
.hbar {
  height: 16px;
  flex: none;
  display: flex;
  align-items: center;
  padding: 0 19px 0 4px;
}
.hbar .thumb {
  width: 117px;
  height: 15px;
  margin-left: 4px;
}
.hbar .end {
  margin-left: auto;
}
.filters {
  height: 9px;
  flex: none;
  padding: 1px 0 0 9px;
}
.filters svg {
  width: 60px;
  height: 8px;
}

.center {
  flex: 1;
  min-width: 0;
  display: flex;
  flex-direction: column;
  margin-left: 5px;
}
.upper {
  flex: 1;
  min-height: 0;
  display: flex;
  gap: 5px;
}
.editor {
  flex: 1;
  min-width: 0;
  display: flex;
  flex-direction: column;
}
.tabs {
  height: 19px;
  flex: none;
  display: flex;
}
.tab {
  display: flex;
  align-items: center;
  width: 117px;
  border: 1px solid var(--edge);
  border-bottom: 0;
  border-radius: 3px 0 0 0;
  background: linear-gradient(#fdfdfb, #ecebe4);
  padding: 1px 4px 0 8px;
  white-space: nowrap;
}
.tab button {
  margin-left: auto;
}
.tab button svg {
  width: 8px;
  height: 8px;
}
.tab.active {
  width: 174px;
  border-top: 2px solid #fab732;
  border-radius: 3px 3px 0 0;
  background: linear-gradient(#e3e9f9, #c9d7f2);
  padding: 0 3px 0 4px;
}
.tab.active span {
  margin-left: 2px;
}
.tab-tools {
  margin-left: auto;
  display: flex;
  gap: 4px;
}
.tab-tools button {
  width: 16px;
  height: 16px;
  justify-content: center;
  border: 1px solid #1c4682;
  border-radius: 3px;
  background: #fcfcfc;
}
.tab-tools .pale {
  border-color: #9db3c8;
}
.tab-tools .next {
  margin-left: -4px;
}
.tab-tools svg {
  width: 9px;
  height: 9px;
}
.editor-body {
  flex: 1;
  min-height: 0;
  display: flex;
  flex-direction: column;
  border: 1px solid var(--edge);
}
.edit-bar {
  height: 27px;
  flex: none;
  display: flex;
  align-items: center;
  gap: 7px;
  padding-top: 3px;
  border-bottom: 1px solid var(--edge);
}
.modes {
  display: flex;
  gap: 7px;
  margin-right: -4px;
}
.mode {
  height: 22px;
  padding: 0 10px;
  border: 1px solid transparent;
}
.mode.on {
  background: #c0dcf3;
  border-color: #90c8f6;
  padding: 0 7px;
}
.sep {
  width: 1px;
  height: 18px;
  margin: 0 -3px;
  background: #808080;
}
.tool svg {
  width: 16px;
  height: 16px;
}
.letter {
  width: 16px;
  height: 16px;
  color: #858585;
  font: 700 17px/16px "DejaVu Sans", sans-serif;
}
.letter.grow,
.letter.shrink {
  font-size: 16px;
  font-style: italic;
}
.letter.shrink {
  font-size: 14px;
}
.letter svg {
  width: 7px;
  height: 5px;
  margin: 0 -5px 8px 0;
}
.f-i,
.f-u,
.f-s {
  font-style: italic;
}
.f-i {
  padding-left: 3px;
}
.f-u {
  text-decoration: underline;
  font-size: 15px;
}
.f-s {
  text-decoration: line-through;
  font-size: 15px;
}
.family {
  width: 140px;
  margin-left: -2px;
}
.size {
  width: 50px;
  margin: 0 -4px 0 -7px;
}
.family select,
.size select {
  height: 21px;
  background: #fff;
  color: #6d6d6d;
}
.formats {
  display: flex;
  gap: 7px;
  margin-left: 8px;
}
.h-ruler {
  height: 20px;
  flex: none;
  padding-left: 20px;
}
.h-scale {
  position: relative;
  height: 20px;
  display: flex;
  border-bottom: 1px solid var(--edge);
}
.outside {
  background: linear-gradient(#d8d8d8, #bdbdbd 30%, #cfcfcf 50%, #bdbdbd);
}
.before {
  width: 49px;
}
.inside {
  width: 664px;
  background: linear-gradient(#f4f4f4, #e2e2e2 40%, #fff 60%);
}
.after {
  flex: 1;
}
.h-scale svg {
  position: absolute;
  left: 0;
  top: 0;
  width: 100%;
  height: 19px;
}
.stage {
  flex: 1;
  min-height: 0;
  display: flex;
}
.v-ruler {
  width: 20px;
  flex: none;
  border-right: 1px solid var(--edge);
  background: #fff;
}
.v-ruler svg {
  width: 20px;
  height: 100%;
}
.canvas {
  flex: 1;
  min-width: 0;
  overflow: hidden;
  padding-left: 12px;
  background: linear-gradient(90deg, #f0f0f0 2px, #dcdcdc 3px, #b9b9b9 12px, #f0f0f0 12px);
}
.page {
  width: 738px;
  height: 100%;
  background: #fff;
  box-shadow: 5px 0 0 #c0c0c0, 8px 0 0 #e4e4e4;
}
.clip {
  position: relative;
  height: 100%;
  overflow: hidden;
}
.shape {
  position: absolute;
}
.shape.frame {
  border: 1px solid #dcdcdc;
}
.shape.blue {
  background: #3399ff;
}
.shape.split {
  background: #5caeff;
}
.shape.guide {
  background: #a8a8ff;
}
.shape.ink {
  background: #000;
}
.ctext {
  position: absolute;
  font: 12px/30px "DejaVu Sans", sans-serif;
  white-space: pre;
}
.middle {
  text-align: center;
}
.right {
  text-align: right;
}
.strong {
  font-weight: 700;
}
.white {
  color: #fff;
}
.tint {
  color: #3399ff;
}
.ctext.mark {
  font: 25px/30px "Liberation Sans", sans-serif;
  color: #e4e4e4;
}
.ctext.headline {
  font: 700 28px/30px Lato, sans-serif;
}
.ctext.bill {
  font-size: 13px;
  color: #3399ff;
}
.ctext.company {
  font-size: 14px;
}
.ctext.total {
  font: 700 17px/30px "Open Sans", sans-serif;
  color: #fff;
}
.ctext.note-title {
  font-size: 13px;
}
.ctext.tiny {
  font: 7px/30px "Noto Sans", sans-serif;
}
.ctext.sign {
  font: 700 12px/30px "Liberation Sans", sans-serif;
}

.palette {
  position: relative;
  width: 134px;
  flex: none;
}
.palette-area {
  flex: 1;
  min-height: 0;
  display: flex;
}
.palette ul {
  flex: 1;
  overflow: hidden;
}
.palette li {
  height: 23px;
  display: flex;
  align-items: center;
  gap: 3px;
  padding-left: 3px;
  white-space: nowrap;
}
.palette li span {
  padding-top: 1px;
}
.palette li.cut {
  height: 7px;
  align-items: flex-end;
  padding-bottom: 4px;
  overflow: hidden;
}
.palette-thumb {
  margin-top: 25px;
  height: 270px;
}
.stage-thumb {
  margin-top: 66px;
  height: 266px;
}
.highlight {
  position: absolute;
  left: -2px;
  bottom: -2px;
  width: 82px;
  height: 26px;
  border: 3px solid #f00000;
}

.output {
  height: 179px;
  flex: none;
  margin-top: 4px;
  display: flex;
  flex-direction: column;
}
.output-heads {
  height: 20px;
  flex: none;
  display: flex;
}
.output-head {
  flex: 1;
  display: flex;
  align-items: center;
  gap: 4px;
  padding: 0 4px 0 3px;
  border: 1px solid var(--edge);
  border-radius: 3px 3px 0 0;
  background: linear-gradient(#fdfdfb, #e9e8e1);
}
.output-head.active {
  border-top: 3px solid #fab732;
  background: #fff;
}
.output-head.active h2 {
  padding-top: 0;
}
.output-body {
  flex: 1;
  display: flex;
  justify-content: flex-end;
  padding: 1px 1px 3px 0;
  border: solid var(--edge);
  border-width: 1px 2px 0 1px;
  border-top-color: #8593a3;
}
.output-body .vbar {
  width: 16px;
  border-bottom: 1px solid #fafafa;
}

.dock {
  width: 25px;
  flex: none;
  padding-top: 5px;
}
.dock button {
  flex-direction: column;
  gap: 3px;
  margin-left: 6px;
  align-items: flex-start;
}
.dock svg {
  width: 16px;
  height: 16px;
}
.dock span {
  writing-mode: vertical-rl;
  line-height: 14px;
}
.h-scale text,
.v-ruler text {
  font-size: 11px;
}
</style>
